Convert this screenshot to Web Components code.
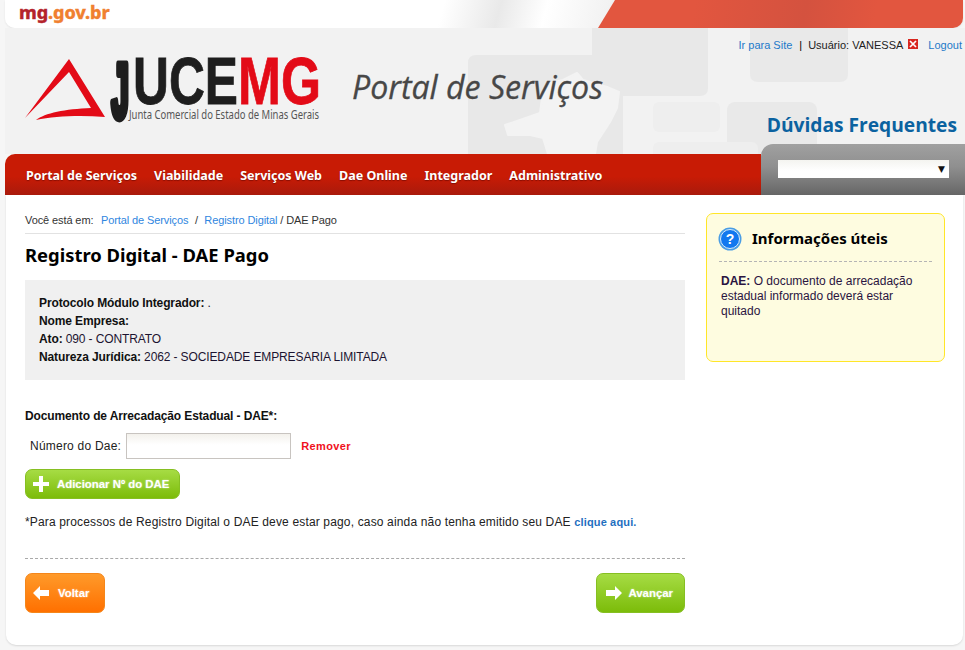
<!DOCTYPE html>
<html lang="pt-BR">
<head>
<meta charset="utf-8">
<title>JUCEMG - Portal de Serviços</title>
<style>
  html, body { margin: 0; padding: 0; }
  body { background: #f6f6f6; font-family: "Liberation Sans", Arial, sans-serif; overflow: hidden; }
</style>
</head>
<body>
<juce-page>
  <top-strip></top-strip>
  <site-header></site-header>
  <main-nav></main-nav>
  <page-content></page-content>
</juce-page>

<script>
class JucePage extends HTMLElement {
  constructor() {
    super();
    this.attachShadow({ mode: "open" }).innerHTML = `
      <style>
        :host { display: flex; flex-direction: column; width: 965px; height: 650px; overflow: hidden; }
      </style>
      <slot></slot>`;
  }
}

class TopStrip extends HTMLElement {
  constructor() {
    super();
    this.attachShadow({ mode: "open" }).innerHTML = `
      <style>
        :host {
          display: flex; align-items: center; position: relative; overflow: hidden;
          height: 28px; margin: 0 2px 0 5px; padding-left: 14px;
          background: linear-gradient(105deg, #fff 0, #fff 425px, #e9e9e9 480px, #fff 525px, #f2f2f2 585px, #e4e4e4 600px);
          border-radius: 0 0 10px 10px;
          box-shadow: 0 1px 2px rgba(0,0,0,.08);
          box-sizing: border-box;
        }
        :host::after {
          content: ""; position: absolute; inset: 0;
          background: linear-gradient(100deg, #e2563f 0, #e2563f 680px, #d4523f 790px, #e2563f 860px, #e2563f 100%);
          clip-path: polygon(593px 28px, 610px 0, 100% 0, 100% 100%);
        }
        .logo { font: 800 18px/22px "Noto Sans", sans-serif; letter-spacing: -.1px; margin-top: -5px; color: #f08030; -webkit-text-stroke: .3px #f08030; }
        .logo b { color: #b4232b; font-weight: 800; -webkit-text-stroke: .3px #b4232b; }
      </style>
      <span class="logo"><b>mg</b>.gov.br</span>`;
  }
}

class SiteHeader extends HTMLElement {
  constructor() {
    super();
    this.attachShadow({ mode: "open" }).innerHTML = `
      <style>
        :host {
          display: flex; flex-direction: column; position: relative; box-sizing: border-box;
          height: 126px; margin-left: 5px; padding: 10px 3px 0 20px; background: #f2f2f2;
        }
        .deco { position: absolute; left: 0; top: 0; }
        .links {
          position: relative; display: flex; justify-content: flex-end; align-items: center;
          font-size: 11px; line-height: 14px; color: #222;
        }
        .links a { color: #2379c9; text-decoration: none; }
        .links .sep { margin: 0 6px 0 7px; color: #000; font-size: 11px; }
        .links svg { margin: 0 10px 2px 5px; }
        .brand { position: relative; display: flex; margin-top: -1px; height: 62px; }
        .brand svg { display: block; }
        .duvidas {
          position: relative; align-self: flex-end; margin: 0 5px 0 0;
          font: bold 19.2px/24px "Open Sans", sans-serif; color: #0b62a0;
        }
      </style>
      <svg class="deco" width="960" height="126" viewBox="0 0 960 126">
        <path d="M463 126V35q0-8 8-8h116V0h116v60q0 8-8 8h-77v58z" fill="#e8e8e8"/>
        <g fill="#e9e9e9">
          <path d="M745 0h98v46q0 8-8 8h-82q-8 0-8-8z"/>
          <rect x="722" y="74" width="90" height="60" rx="8"/>
          <rect x="648" y="74" width="67" height="30" rx="6" fill="#eeeeee"/>
          <rect x="648" y="114" width="105" height="20" rx="6" fill="#eeeeee"/>
        </g>
        <path d="M500 97l15-5 20-7 2-15 8-15 13-3 14-7 6 7 24 7 12 5-2 16-7 14-13 20-2 12h-47l-5-16-13-3-22 0z" fill="#f3f3f3" stroke="#f3f3f3" stroke-width="2" stroke-linejoin="round"/>
      </svg>
      <div class="links">
        <a href="#">Ir para Site</a><span class="sep">|</span>
        <span>Usuário: VANESSA</span>
        <svg width="10" height="10" viewBox="0 0 10 10"><rect width="10" height="10" fill="#d8261f"/><path d="M2 2l6 6M8 2l-6 6" stroke="#fff" stroke-width="1.7"/></svg>
        <a href="#">Logout</a>
      </div>
      <div class="brand">
        <svg width="600" height="78" viewBox="0 0 600 78" overflow="visible">
          <path d="M0 67L44 8l36 58C55 64 30 65 11 69c9-7 29-11 55-12L44 21z" fill="#e30b17"/>
          <text transform="translate(86.5 65.5) scale(.6 1.46)" font-family="Liberation Sans" font-weight="700" font-size="52" stroke="#1e1e1e" stroke-width="6" stroke-linejoin="round" fill="#1e1e1e">J</text>
          <text x="108" y="53" font-family="Liberation Sans" font-weight="700" font-size="67" textLength="105" lengthAdjust="spacingAndGlyphs" stroke="#1e1e1e" stroke-width=".8" fill="#1e1e1e">UCE</text>
          <text x="213" y="53" font-family="Liberation Sans" font-weight="700" font-size="67" textLength="83" lengthAdjust="spacingAndGlyphs" stroke="#e30b17" stroke-width=".8" fill="#e30b17">MG</text>
          <text x="104" y="68" font-family="Noto Sans" font-size="13" textLength="190" lengthAdjust="spacingAndGlyphs" fill="#555">Junta Comercial do Estado de Minas Gerais</text>
          <text x="327" y="48" font-family="Open Sans" font-style="italic" font-size="32" textLength="251" lengthAdjust="spacingAndGlyphs" stroke="#474747" stroke-width=".3" fill="#474747">Portal de Serviços</text>
        </svg>
      </div>
      <div class="duvidas">Dúvidas Frequentes</div>`;
  }
}

class MainNav extends HTMLElement {
  constructor() {
    super();
    const items = ["Portal de Serviços", "Viabilidade", "Serviços Web", "Dae Online", "Integrador", "Administrativo"];
    this.attachShadow({ mode: "open" }).innerHTML = `
      <style>
        :host { display: flex; margin-left: 5px; height: 41px; position: relative; }
        nav {
          flex: 1; display: flex; align-items: center; gap: 17px; padding: 2px 0 0 21px; box-sizing: border-box;
          background: linear-gradient(#c81b05 0, #c81b05 55%, #a91a0c 100%);
          border-radius: 10px 0 0 0;
        }
        nav a {
          font: bold 12.5px/16px "Noto Sans", sans-serif; color: #fff; text-decoration: none;
          text-shadow: 0 1px 1px rgba(80,0,0,.5);
        }
        .search {
          width: 204px; height: 51px; margin-top: -10px; box-sizing: border-box; padding: 16px 16px 0 17px;
          background: linear-gradient(#a0a0a0, #8f8f8f 45%, #666);
          border-radius: 12px 0 0 0;
        }
        .combo {
          display: flex; justify-content: flex-end; align-items: center; height: 18px; padding-right: 4px;
          box-sizing: border-box; background: linear-gradient(#f4f4f0, #fff 60%);
          font: 9px/18px "DejaVu Sans", sans-serif; color: #111;
        }
      </style>
      <nav>${items.map(i => `<a href="#">${i}</a>`).join("")}</nav>
      <div class="search"><div class="combo">▼</div></div>`;
  }
}

class ActionButton extends HTMLElement {
  constructor() {
    super();
    this.attachShadow({ mode: "open" }).innerHTML = `
      <style>
        :host {
          display: inline-flex; align-items: center; box-sizing: border-box; height: 40px;
          padding: 0 11px 0 7px; gap: 9px; border-radius: 7px;
          font: bold 11.4px/14px "Liberation Sans", sans-serif; color: #fff;
          text-shadow: 0 0 2px rgba(255,255,255,.6);
          background: linear-gradient(#a6dc44, #7cbc0a);
          border: 1px solid #86bf22;
        }
        :host([tone="orange"]) {
          background: linear-gradient(#ff9a2a, #ff7000); border-color: #f5861a;
        }
      </style>
      <slot name="icon"></slot><slot></slot>`;
  }
}

class InfoPanel extends HTMLElement {
  constructor() {
    super();
    this.attachShadow({ mode: "open" }).innerHTML = `
      <style>
        :host {
          display: block; box-sizing: border-box; width: 239px; height: 149px; margin-top: 18px;
          padding: 13px 12px 0 12px; background: #fefce0; border: 1px solid #ffe628; border-radius: 7px;
        }
        header {
          display: flex; align-items: center; gap: 9px; height: 35px;
          border-bottom: 1px dashed #b5b5b5; margin-bottom: 12px; box-sizing: border-box;
        }
        header svg { margin-bottom: 11px; margin-left: -1px; }
        h3 { margin: 0 0 13px 1px; font: bold 15px/20px "Noto Sans", sans-serif; color: #000; }
        p { margin: 0 0 0 2px; font-size: 12px; line-height: 15px; color: #2a1440; }
        b { color: #111; }
      </style>
      <header>
        <svg width="24" height="24" viewBox="0 0 24 24"><circle cx="12" cy="12" r="11.5" fill="#4a9de4"/><circle cx="12" cy="12" r="9.5" fill="#1278ef" stroke="#d8ecfb" stroke-width="1"/><text x="12" y="17" text-anchor="middle" font-family="Liberation Sans" font-weight="700" font-size="14" fill="#fff">?</text></svg>
        <h3><slot name="title"></slot></h3>
      </header>
      <p><slot></slot></p>`;
  }
}

class PageContent extends HTMLElement {
  constructor() {
    super();
    this.attachShadow({ mode: "open" }).innerHTML = `
      <style>
        :host {
          display: flex; gap: 21px; box-sizing: border-box; height: 450px; margin: 0 2px 0 6px;
          padding: 0 0 0 19px; background: #fff; border-radius: 0 0 10px 10px;
          box-shadow: 0 1px 2px rgba(0,0,0,.12);
          font-size: 12px; color: #111;
        }
        .main { width: 660px; flex: none; }
        .crumbs {
          display: flex; box-sizing: border-box; height: 39px; padding-top: 19px; line-height: 13px;
          font-size: 11px; letter-spacing: -.1px; color: #333; border-bottom: 1px solid #e2e2e2;
        }
        .crumbs a:first-of-type { margin-left: 7.5px; }
        .crumbs .slash { margin: 0 6.5px; }
        .crumbs .last { margin-left: 3px; }
        a { color: #2f86e0; text-decoration: none; }
        h1 { margin: 10px 0 0; font: bold 18.4px/22px "Noto Sans", sans-serif; color: #000; }
        .summary { margin-top: 14px; height: 100px; box-sizing: border-box; padding: 14px 14px; background: #f0f0f0; line-height: 18px; color: #1c1430; letter-spacing: -.12px; }
        .summary b { color: #111; }
        .dae-label { margin-top: 29px; font-weight: bold; line-height: 14px; letter-spacing: -.12px; }
        .dae-row { display: flex; align-items: center; margin-top: 10px; height: 26px; padding-left: 5px; color: #222; letter-spacing: .22px; }
        .field { width: 165px; height: 26px; box-sizing: border-box; margin: 0 10px 0 5px; border: 1px solid #c8c4c0; background: linear-gradient(#f3f1ec, #fff 45%); }
        .remove { color: #f01020; font-weight: bold; font-size: 11px; letter-spacing: .4px; }
        .add { margin-top: 10px; display: flex; }
        .add action-button { height: 30px; padding: 0 10px 0 7px; gap: 8px; }
        .note { margin: 16px 0 0; line-height: 14px; color: #222; letter-spacing: .155px; }
        .note a { font-weight: bold; font-size: 11px; color: #1f6fc0; }
        .actions { display: flex; justify-content: space-between; margin-top: 29px; padding-top: 14px; border-top: 1px dashed #a9a9a9; }
        .back { padding: 0 15px 0 7px; }
        .next { padding: 0 11px 0 9px; gap: 6px; }
        svg { display: block; flex: none; }
      </style>
      <div class="main">
        <div class="crumbs"><span>Você está em:</span><a href="#">Portal de Serviços</a><span class="slash">/</span><a href="#">Registro Digital</a><span class="last">/ DAE Pago</span></div>
        <h1>Registro Digital - DAE Pago</h1>
        <div class="summary">
          <b>Protocolo Módulo Integrador:</b> .<br>
          <b>Nome Empresa:</b><br>
          <b>Ato:</b> 090 - CONTRATO<br>
          <b>Natureza Jurídica:</b> 2062 - SOCIEDADE EMPRESARIA LIMITADA
        </div>
        <div class="dae-label">Documento de Arrecadação Estadual - DAE*:</div>
        <div class="dae-row"><span>Número do Dae:</span><div class="field"></div><span class="remove">Remover</span></div>
        <div class="add">
          <action-button>
            <svg slot="icon" width="16" height="16" viewBox="0 0 16 16"><path d="M6 0h4v6h6v4h-6v6H6v-6H0V6h6z" fill="#fff"/></svg>
            Adicionar Nº do DAE
          </action-button>
        </div>
        <p class="note">*Para processos de Registro Digital o DAE deve estar pago, caso ainda não tenha emitido seu DAE <a href="#">clique aqui.</a></p>
        <div class="actions">
          <action-button class="back" tone="orange">
            <svg slot="icon" width="16" height="16" viewBox="0 0 16 16"><path d="M0 8l7-7v4h9v6H7v4z" fill="#fff"/></svg>
            Voltar
          </action-button>
          <action-button class="next">
            <svg slot="icon" width="16" height="16" viewBox="0 0 16 16"><path d="M16 8L9 1v4H0v6h9v4z" fill="#fff"/></svg>
            Avançar
          </action-button>
        </div>
      </div>
      <info-panel>
        <span slot="title">Informações úteis</span>
        <b>DAE:</b> O documento de arrecadação estadual informado deverá estar quitado
      </info-panel>`;
  }
}

customElements.define("juce-page", JucePage);
customElements.define("top-strip", TopStrip);
customElements.define("site-header", SiteHeader);
customElements.define("main-nav", MainNav);
customElements.define("action-button", ActionButton);
customElements.define("info-panel", InfoPanel);
customElements.define("page-content", PageContent);
</script>
</body>
</html>
